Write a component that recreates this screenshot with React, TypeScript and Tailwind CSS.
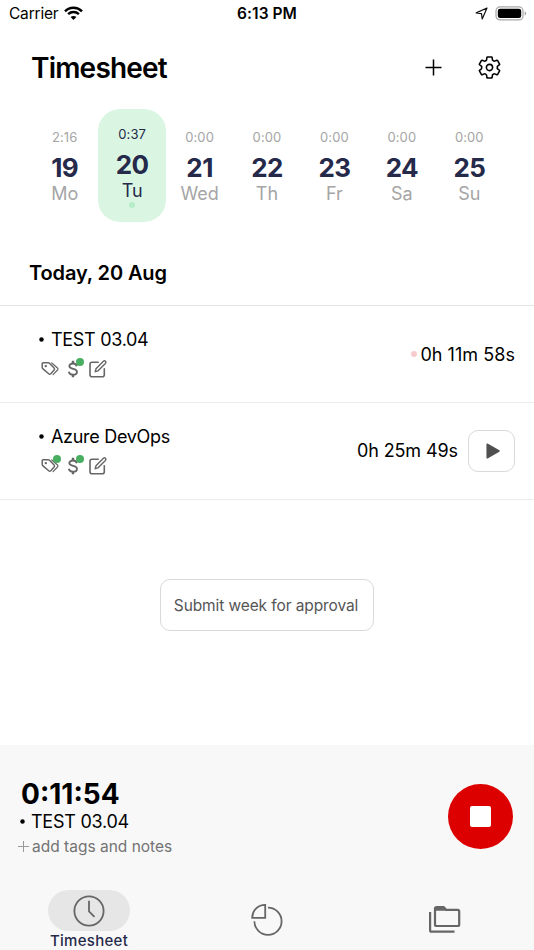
import React from "react";
import { IoSettingsOutline } from "react-icons/io5";

const days = [
  { time: "2:16", num: "19", name: "Mo" },
  { time: "0:37", num: "20", name: "Tu" },
  { time: "0:00", num: "21", name: "Wed" },
  { time: "0:00", num: "22", name: "Th" },
  { time: "0:00", num: "23", name: "Fr" },
  { time: "0:00", num: "24", name: "Sa" },
  { time: "0:00", num: "25", name: "Su" },
];

function WifiIcon() {
  return (
    <svg className="mb-[2px] ml-[6px] h-[14px] w-[19px]" viewBox="0 0 19 14" fill="none" stroke="black">
      <path d="M1 5.3C5.7 .7 13.3 .7 18 5.3" strokeWidth="2.5" />
      <path d="M4.1 8.2C7.2 5.3 11.8 5.3 14.9 8.2" strokeWidth="2.4" />
      <path d="M9.5 13.9L6.6 11C8.2 9.5 10.8 9.5 12.4 11Z" fill="black" stroke="none" />
    </svg>
  );
}

function StatusBar() {
  return (
    <div className="grid h-7 grid-cols-3 items-center pr-[7px] pl-[9px] text-[15.5px]">
      <div className="flex items-center">
        <span className="tracking-[-0.2px]">Carrier</span>
        <WifiIcon />
      </div>
      <span className="pr-[2px] text-center font-semibold tracking-[0.05px]">6:13 PM</span>
      <div className="flex items-center justify-end">
        <svg className="mr-[7px] mb-px h-[13px] w-[13px]" viewBox="0 0 13 13" fill="none" stroke="#111" strokeWidth="1.2" strokeLinejoin="round">
          <path d="M12 1L1.2 5.9L6.5 6.7L7.2 12Z" />
        </svg>
        <svg className="mb-[2px] h-[15px] w-[32px]" viewBox="0 0 32 15" fill="none">
          <rect x="1" y=".9" width="27" height="13" rx="4" stroke="#a6a6a6" strokeWidth="1.2" />
          <rect x="2.8" y="2.7" width="23.4" height="9.4" rx="2.3" fill="black" />
          <path d="M29.7 5.3Q31.2 6 31.2 7.4Q31.2 8.8 29.7 9.5Z" fill="#a6a6a6" />
        </svg>
      </div>
    </div>
  );
}

function Tags() {
  return (
    <svg className="h-[18px] w-[18px]" viewBox="0 0 18 18" fill="none" stroke="#666" strokeWidth="1.5" strokeLinejoin="round" strokeLinecap="round">
      <path d="M2.1 2.7H7.1Q7.9 2.7 8.5 3.3L13.1 8Q14 9 13.1 10L9.8 13.8Q8.8 14.8 7.7 13.8L2 8.9Q1.2 8.2 1.2 7.3V3.6Q1.2 2.7 2.1 2.7Z" />
      <path d="M10.8 3L16.5 8Q17.4 9 16.5 10L12.1 14.6" strokeWidth="1.2" />
      <circle cx="4.8" cy="6.1" r="1.2" fill="#666" stroke="none" />
    </svg>
  );
}

function Dollar() {
  return (
    <svg className="h-[18px] w-[12px]" viewBox="0 0 12 18" fill="none" stroke="#666" strokeWidth="1.8">
      <path d="M9.8 6.2C9.4 4.4 8 3.5 6 3.5C3.8 3.5 2.3 4.5 2.3 6.1C2.3 7.8 3.7 8.4 6 8.9C8.5 9.4 10 10.1 10 11.9C10 13.6 8.4 14.6 6 14.6C3.7 14.6 2.2 13.5 1.8 11.7" />
      <path d="M6 .7V3.7M6 14.4V17.3" strokeWidth="2.4" />
    </svg>
  );
}

function Edit() {
  return (
    <svg className="h-[18px] w-[18px]" viewBox="0 0 18 18" fill="none" stroke="#666" strokeWidth="1.6" strokeLinejoin="round" strokeLinecap="round">
      <path d="M9.2 2.2H3C1.7 2.2 1 2.9 1 4.2V14.8C1 16.1 1.7 16.8 3 16.8H13.3C14.6 16.8 15.3 16.1 15.3 14.8V8.8" />
      <path d="M6.2 11.7L7 8.7L14.4 1.3C15.8 .1 17.7 1.9 16.4 3.4L9.1 10.8Z" strokeWidth="1.4" />
    </svg>
  );
}

function EntryInfo({ title, tagged }: { title: string; tagged?: boolean }) {
  return (
    <div className="pt-[20px] pl-[40px]">
      <div className="flex h-[26px] items-center text-[18px] tracking-[-0.3px]">
        <span className="mr-[6px] -ml-px size-[5px] scale-90 rounded-full bg-black" />
        <span className="pl-px">{title}</span>
      </div>
      <div className="mt-[8px] ml-[1px] flex h-[18px] items-center">
        <span className="relative">
          <Tags />
          {tagged && <span className="absolute -top-[2px] left-[12px] size-2 rounded-full bg-[#48ae61]" />}
        </span>
        <span className="relative ml-[7px] w-[17px]">
          <span className="block pl-px"><Dollar /></span>
          <span className="absolute -top-[2px] left-[10px] size-2 rounded-full bg-[#48ae61]" />
        </span>
        <span className="ml-[6px]"><Edit /></span>
      </div>
    </div>
  );
}

export default function App() {
  return (
    <div className="flex h-[950px] w-[534px] flex-col overflow-hidden bg-white font-['Inter','Liberation_Sans',sans-serif] text-black">
      <StatusBar />
      <header className="flex h-[79px] items-center pr-[32px] pl-[31px]">
        <h1 className="flex-1 pt-px text-[28px] font-semibold tracking-[-0.8px]">Timesheet</h1>
        <svg className="mr-[35px] size-[17px]" viewBox="0 0 17 17" stroke="black" strokeWidth="1.5">
          <path d="M8.5 .5V16.5M.5 8.5H16.5" />
        </svg>
        <IoSettingsOutline className="size-[25px]" strokeWidth={6} />
      </header>

      <div className="mt-[1.5px] grid h-[113.5px] grid-cols-7 px-[31px] text-center">
        {days.map((d, i) => (
          <div
            key={d.num}
            className={
              i === 1
                ? "flex flex-col items-center rounded-[22px] bg-[#daf6e3] pt-[16.5px] text-[#25294a]"
                : "flex flex-col items-center pt-[19.5px] text-[#a5a5a5]"
            }
          >
            <span className="h-[18px] text-[13px] leading-[18px] tracking-[0.1px]">{d.time}</span>
            <span className="mt-[7px] h-[30px] text-[26px] leading-[30px] font-bold tracking-[-0.6px] text-[#25294a]">{d.num}</span>
            <span className="-mt-px h-[24px] text-[18px] leading-[24px]">{d.name}</span>
            {i === 1 && <span className="-mt-px size-[6px] rounded-full bg-[#b5edc8]" />}
          </div>
        ))}
      </div>

      <div className="flex h-[84px] items-center border-b border-[#e3e3e3] pt-[18px] pl-[29px] text-[20px] font-semibold tracking-[-0.12px]">
        Today, 20 Aug
      </div>

      <div className="flex h-[97px] justify-between border-b border-[#ececec]">
        <EntryInfo title="TEST 03.04" />
        <div className="flex items-center pr-[19px] text-[18px] tracking-[0.05px]">
          <span className="mr-[3px] size-[6px] rounded-full bg-[#f7cbcd]" />
          0h 11m 58s
        </div>
      </div>
      <div className="flex h-[97px] justify-between border-b border-[#ececec]">
        <EntryInfo title="Azure DevOps" tagged />
        <div className="flex items-center pr-[19px] text-[18px] tracking-[-0.1px]">
          <span className="pb-px">0h 25m 49s</span>
          <button className="ml-[10px] flex h-[42px] w-[47px] items-center justify-center rounded-[10px] border border-[#d9d9d9] pl-[3px]">
            <svg className="h-4 w-[14px]" viewBox="0 0 14 16">
              <path d="M1.2 1.2L13 8L1.2 14.8Z" fill="#505050" stroke="#505050" strokeWidth="1.5" strokeLinejoin="round" />
            </svg>
          </button>
        </div>
      </div>

      <div className="flex h-[245px] justify-center pt-[79px]">
        <button className="h-[52px] w-[214px] rounded-[10px] border border-[#d9d9d9] pt-[2px] pr-[2px] text-[15.5px] tracking-[-0.1px] whitespace-nowrap text-[#555]">
          Submit week for approval
        </button>
      </div>

      <footer className="flex flex-1 flex-col bg-[#f8f8f8]">
        <div className="flex h-[145px] items-start justify-between pr-[21px]">
          <div className="pt-[33px] pl-[20px]">
            <div className="h-[32px] pl-px text-[28px] leading-[32px] font-bold">0:11:54</div>
            <div className="-mt-px flex h-[24px] items-center text-[18px] tracking-[-0.25px]">
              <span className="mr-[6px] size-[5px] scale-90 rounded-full bg-black" />
              TEST 03.04
            </div>
            <div className="-ml-[2px] flex h-[26px] items-center text-[15.5px] text-[#737373]">
              <svg className="mr-[3px] size-[11px]" viewBox="0 0 11 11" stroke="#999" strokeWidth="1">
                <path d="M5.5 0V11M0 5.5H11" />
              </svg>
              <span className="pt-[2px]">add tags and notes</span>
            </div>
          </div>
          <button className="mt-[38.5px] flex size-[65px] items-center justify-center rounded-full bg-[#dd0000]">
            <span className="size-[21px] rounded-[2px] bg-white" />
          </button>
        </div>
        <nav className="grid flex-1 grid-cols-3">
          <div className="flex flex-col items-center">
            <span className="flex h-[41px] w-[82px] items-center justify-center rounded-full bg-[#e6e6e7]">
              <svg className="size-8" viewBox="0 0 32 32" fill="none" stroke="#666" strokeWidth="1.8">
                <circle cx="16" cy="16" r="14.6" />
                <path d="M16 5.7V16.3L21.5 21.8" />
              </svg>
            </span>
            <span className="text-[15px] leading-[19px] font-medium tracking-[0.3px] text-[#25294a]">Timesheet</span>
          </div>
          <div className="flex justify-center pt-[14px]">
            <svg className="size-8" viewBox="0 0 32 32" fill="none" stroke="#666" strokeWidth="1.8">
              <path d="M14.2 .9V13.8H1.2C1.2 6.5 6.8 .9 14.2 .9Z" />
              <path d="M17 3.6A13.6 13.6 0 1 1 3.4 17.2" />
            </svg>
          </div>
          <div className="flex justify-center pt-[16px]">
            <svg className="h-[27px] w-[32px]" viewBox="0 0 32 27" fill="none" stroke="#666" strokeWidth="2.2">
              <path d="M1.1 6V24.2Q1.1 25.7 2.6 25.7H25.5" />
              <path d="M6 5V2.5Q6 1.2 7.5 1.2H14.7L17.3 3.9H28.7Q30.2 3.9 30.2 5.4V18.5Q30.2 20 28.7 20H7.5Q6 20 6 18.5Z" />
              <path d="M6 4.8V2Q6 1 7.5 1H14.7L17.5 3.9V4.8Z" fill="#666" stroke="none" />
            </svg>
          </div>
        </nav>
      </footer>
    </div>
  );
}
